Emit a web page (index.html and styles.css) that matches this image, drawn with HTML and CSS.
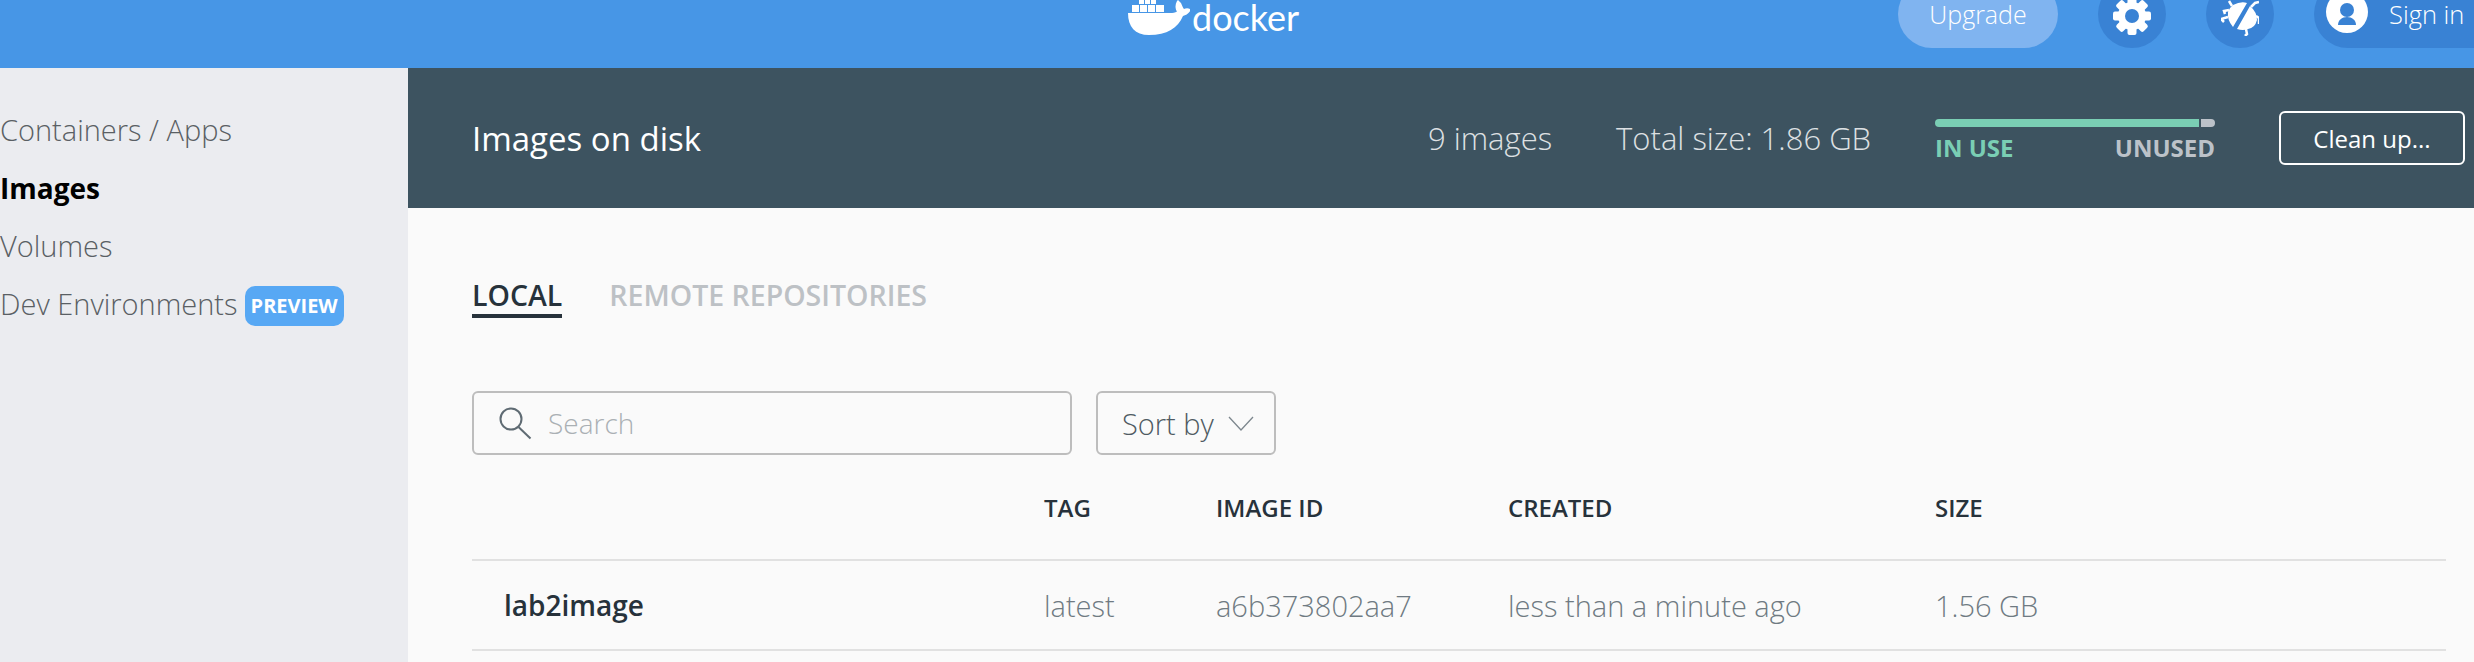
FILE: index.html
```html
<!DOCTYPE html>
<html lang="en">
    <head>
        <meta charset="utf-8">
        <title>Docker Desktop - Images</title>
        <link rel="stylesheet" href="styles.css">
    </head>
    <body>
        <div class="topbar">
            <div class="logo">
                <svg class="whale" width="62" height="36" viewBox="0 0 62 36">
                    <path fill="#fff" d="M11 0h5v4h-5zM17 0h5v4h-5zM23 0h5v4h-5zM4 5h7v7H4zM12 5h7v7h-7zM20 5h7v7h-7zM28 5h8v7h-8zM0 13h42c3 0 5-.5 7-1.500-2-3-2-7 0-10.500l1-1 3 3c1 2 2 5 3 6 2-1 5-1 7 .5-2 4-5 5.500-8 6.500C50 28 39 35 21 35 7 35 0 27 0 13z"/>
                </svg>
                <span class="wordmark">docker</span>
            </div>
            <div class="actions">
                <button class="upgrade">Upgrade</button>
                <span class="round">
                    <svg class="gear" width="38" height="38" viewBox="-19 -19 38 38">
                        <g fill="#fff">
                            <circle r="14"/>
                            <rect x="-4.500" y="-19" width="9" height="9" rx="2"/>
                            <rect x="-4.500" y="-19" width="9" height="9" rx="2" transform="rotate(45)"/>
                            <rect x="-4.500" y="-19" width="9" height="9" rx="2" transform="rotate(90)"/>
                            <rect x="-4.500" y="-19" width="9" height="9" rx="2" transform="rotate(135)"/>
                            <rect x="-4.500" y="-19" width="9" height="9" rx="2" transform="rotate(180)"/>
                            <rect x="-4.500" y="-19" width="9" height="9" rx="2" transform="rotate(225)"/>
                            <rect x="-4.500" y="-19" width="9" height="9" rx="2" transform="rotate(270)"/>
                            <rect x="-4.500" y="-19" width="9" height="9" rx="2" transform="rotate(315)"/>
                        </g>
                        <circle r="7" fill="#3982d4"/>
                    </svg>
                </span>
                <span class="round">
                    <svg class="bug" width="38" height="36" viewBox="0 0 38 36">
                        <path fill="none" stroke="#fff" stroke-width="2.500" d="M11 6 8 1M8 10l-5 1 1 3M7 17l-7 2 3 3M30 7l4-4 4-1M35 16l3 2v6M25 29l1 5-2 2"/>
                        <path fill="#fff" d="M12 5q8-4 14-2L12 27q-6-7-5-15 1-4 5-7zM29 6q7 6 7 14-2 8-9 9-5 2-11 0z"/>
                    </svg>
                </span>
                <button class="signin">
                    <svg width="42" height="42" viewBox="0 0 42 42"><circle cx="21" cy="21" r="21" fill="#fff"/><circle cx="21" cy="19" r="7" fill="#3982d4"/><path fill="#3982d4" d="M12 34c0-5 4-8 9-8s9 3 9 8z"/></svg>
                    <span>Sign in</span>
                </button>
            </div>
        </div>

        <div class="main">
            <div class="sidebar">
                <a href="#">Containers / Apps</a>
                <a href="#" class="active">Images</a>
                <a href="#">Volumes</a>
                <a href="#">Dev Environments<span class="badge">PREVIEW</span></a>
            </div>

            <div class="content">
                <div class="header">
                    <h1>Images on disk</h1>
                    <span class="stat">9 images</span>
                    <span class="stat">Total size: 1.86 GB</span>
                    <div class="usage">
                        <div class="bar"><span class="used"></span><span class="free"></span></div>
                        <div class="legend"><span class="in-use">IN USE</span><span>UNUSED</span></div>
                    </div>
                    <button class="cleanup">Clean up...</button>
                </div>

                <div class="body">
                    <div class="tabs">
                        <a href="#" class="tab current">LOCAL</a>
                        <a href="#" class="tab">REMOTE REPOSITORIES</a>
                    </div>

                    <div class="filters">
                        <div class="search">
                            <svg width="33" height="33" viewBox="0 0 33 33" fill="none" stroke="#5f6b73" stroke-width="2"><circle cx="12" cy="12" r="10.500"/><path d="m19.500 20 12 11.500"/></svg>
                            <span>Search</span>
                        </div>
                        <div class="sort">
                            Sort by
                            <svg width="26" height="15" viewBox="0 0 26 15" fill="none" stroke="#7d878e" stroke-width="1.300"><path d="m1 1 12 13L25 1"/></svg>
                        </div>
                    </div>

                    <div class="row head">
                        <span></span><span>TAG</span><span>IMAGE ID</span><span>CREATED</span><span>SIZE</span>
                    </div>
                    <div class="row">
                        <span class="name">lab2image</span><span>latest</span><span>a6b373802aa7</span><span>less than a minute ago</span><span>1.56 GB</span>
                    </div>
                </div>
            </div>
        </div>
    </body>
</html>
```

FILE: styles.css
```css
* {
    box-sizing: border-box;
}

html, body {
    height: 100%;
}

body {
    margin: 0;
    background: #FAFAFA;
    font-family: "Open Sans", sans-serif;
    overflow: hidden;
    display: flex;
    flex-direction: column;
}

a {
    text-decoration: none;
    color: inherit;
}

button {
    font-family: inherit;
    border: 0;
    padding: 0;
}

/* top bar, the top of the window is cut off in the shot */
.topbar {
    height: 68px;
    flex: none;
    background: #4796E6;
    overflow: hidden;
    display: flex;
    align-items: flex-start;
}

.logo {
    margin-left: 1128px;
    display: flex;
    color: #FFF;
}

.whale {
    display: block;
}

.wordmark {
    font-family: "Lato", sans-serif;
    font-size: 36px;
    line-height: 34px;
    margin-left: 2px;
}

.actions {
    display: flex;
    gap: 40px;
    margin: -20px -146px 0 auto;
}

.upgrade {
    width: 160px;
    height: 68px;
    border-radius: 34px;
    background: #80B4F0;
    color: #FFF;
    font-size: 25px;
    font-weight: 300;
}

.round {
    width: 68px;
    height: 68px;
    border-radius: 50%;
    background: #3982D4;
    display: flex;
    align-items: center;
    justify-content: center;
}

.gear {
    margin-top: 3px;
}

.bug {
    margin-top: 8px;
}

.signin {
    width: 306px;
    height: 68px;
    border-radius: 34px;
    background: #3982D4;
    color: #FFF;
    font-size: 25.500px;
    font-weight: 300;
    display: flex;
    align-items: center;
    gap: 21px;
    padding-left: 12px;
}

.signin svg {
    margin-bottom: 4px;
}

.main {
    flex: 1;
    display: flex;
    min-height: 0;
}

.sidebar {
    width: 408px;
    flex: none;
    background: #EBECF0;
    padding-top: 45px;
    display: flex;
    flex-direction: column;
    gap: 24px;
}

.sidebar a {
    font-size: 29px;
    line-height: 34px;
    font-weight: 300;
    color: #5A5F64;
    height: 34px;
    white-space: nowrap;
    display: flex;
    align-items: center;
    gap: 7px;
}

.sidebar a.active {
    font-weight: 700;
    font-size: 28px;
    color: #000;
}

.badge {
    background: #57A8F4;
    color: #FFF;
    font-size: 20px;
    font-weight: 700;
    line-height: 40px;
    height: 40px;
    padding: 0 6px;
    border-radius: 10px;
    margin-top: 3px;
}

.content {
    flex: 1;
    min-width: 0;
}

.header {
    height: 140px;
    background: #3D5360;
    color: #FFF;
    display: flex;
    align-items: center;
    gap: 64px;
    padding: 0 9px 0 64px;
}

.header h1 {
    margin: 0 auto 0 0;
    font-size: 33px;
    font-weight: 400;
}

.stat {
    font-size: 31px;
    font-weight: 300;
    color: #DDE0E3;
}

.usage {
    width: 280px;
    margin-top: 6px;
}

.bar {
    height: 8px;
    display: flex;
    gap: 2px;
}

.used {
    flex: 1;
    background: #7ACEB4;
    border-radius: 4px 0 0 4px;
}

.free {
    width: 14px;
    background: #BCC2C9;
    border-radius: 0 4px 4px 0;
}

.legend {
    display: flex;
    justify-content: space-between;
    font-size: 24px;
    font-weight: 700;
    color: #BCC2C9;
    line-height: 32px;
    margin-top: 5px;
}

.in-use {
    color: #7ACEB4;
}

.cleanup {
    width: 186px;
    height: 54px;
    background: transparent;
    border: 2px solid #FFF;
    border-radius: 6px;
    color: #FFF;
    font-size: 24px;
    flex: none;
}

.body {
    padding: 62px 28px 0 64px;
}

.tabs {
    display: flex;
    gap: 47px;
    height: 48px;
}

.tab {
    font-size: 28.500px;
    font-weight: 600;
    color: #BDC1C5;
    line-height: 50px;
    height: 48px;
}

.tab.current {
    color: #27323B;
    border-bottom: 4px solid #27323B;
}

.filters {
    display: flex;
    gap: 24px;
    margin-top: 73px;
}

.search, .sort {
    height: 64px;
    border: 2px solid #BDBDBD;
    border-radius: 6px;
    display: flex;
    align-items: center;
}

.search {
    width: 600px;
    padding-left: 25px;
    gap: 16px;
    font-size: 28px;
    font-weight: 300;
    color: #AAB0B4;
}

.sort {
    width: 180px;
    padding-left: 24px;
    gap: 14px;
    font-size: 29px;
    font-weight: 300;
    color: #4F5A62;
}

.row {
    display: grid;
    grid-template-columns: 572px 172px 292px 427px 1fr;
    align-items: center;
    height: 90px;
    border-bottom: 2px solid #E1E1E1;
    font-size: 29px;
    font-weight: 300;
    color: #6F7A82;
}

.row span {
    white-space: nowrap;
}

.head {
    height: 106px;
    font-size: 24px;
    font-weight: 600;
    color: #27323B;
}

.row .name {
    padding-left: 32px;
    font-size: 28px;
    font-weight: 600;
    color: #27323B;
}
```
